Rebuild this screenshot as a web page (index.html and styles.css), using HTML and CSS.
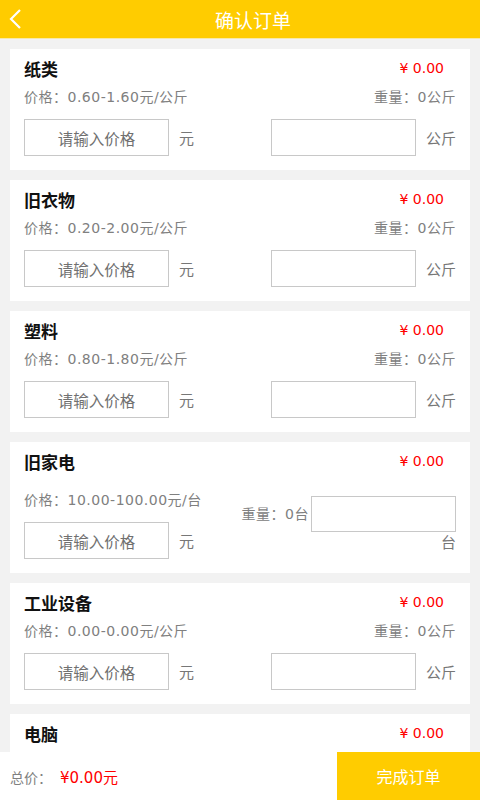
FILE: index.html
```html
<!DOCTYPE html>
<html lang="zh-CN">
<head>
  <meta charset="UTF-8">
  <meta name="viewport" content="width=device-width, initial-scale=1.0">
  <title>确认订单</title>
  <link rel="stylesheet" href="styles.css">
</head>
<body>
  <header class="topbar">
    <a class="back" href="#">
      <svg width="14" height="22" viewBox="0 0 14 22"><path d="M12 2 L3 11 L12 20" fill="none" stroke="#fff" stroke-width="2.2"/></svg>
    </a>
    <span class="title">确认订单</span>
  </header>

  <div class="list">
    <div class="card">
      <div class="row head"><span class="name">纸类</span><span class="amount">¥ 0.00</span></div>
      <div class="row info"><span>价格：0.60-1.60元/公斤</span><span>重量：0公斤</span></div>
      <div class="row inputs">
        <div class="group"><input class="box" placeholder="请输入价格"><span class="unit">元</span></div>
        <div class="group"><input class="box"><span class="unit">公斤</span></div>
      </div>
    </div>

    <div class="card">
      <div class="row head"><span class="name">旧衣物</span><span class="amount">¥ 0.00</span></div>
      <div class="row info"><span>价格：0.20-2.00元/公斤</span><span>重量：0公斤</span></div>
      <div class="row inputs">
        <div class="group"><input class="box" placeholder="请输入价格"><span class="unit">元</span></div>
        <div class="group"><input class="box"><span class="unit">公斤</span></div>
      </div>
    </div>

    <div class="card">
      <div class="row head"><span class="name">塑料</span><span class="amount">¥ 0.00</span></div>
      <div class="row info"><span>价格：0.80-1.80元/公斤</span><span>重量：0公斤</span></div>
      <div class="row inputs">
        <div class="group"><input class="box" placeholder="请输入价格"><span class="unit">元</span></div>
        <div class="group"><input class="box"><span class="unit">公斤</span></div>
      </div>
    </div>

    <div class="card tall">
      <div class="row head"><span class="name">旧家电</span><span class="amount">¥ 0.00</span></div>
      <div class="row split">
        <div class="col-left">
          <div class="info-text">价格：10.00-100.00元/台</div>
          <div class="group"><input class="box" placeholder="请输入价格"><span class="unit">元</span></div>
        </div>
        <div class="col-right">
          <div class="weight-line"><span class="info-text">重量：0台</span><input class="box"></div>
          <div class="unit under">台</div>
        </div>
      </div>
    </div>

    <div class="card">
      <div class="row head"><span class="name">工业设备</span><span class="amount">¥ 0.00</span></div>
      <div class="row info"><span>价格：0.00-0.00元/公斤</span><span>重量：0公斤</span></div>
      <div class="row inputs">
        <div class="group"><input class="box" placeholder="请输入价格"><span class="unit">元</span></div>
        <div class="group"><input class="box"><span class="unit">公斤</span></div>
      </div>
    </div>

    <div class="card last">
      <div class="row head"><span class="name">电脑</span><span class="amount">¥ 0.00</span></div>
    </div>
  </div>

  <footer class="bottombar">
    <div class="total">总价：<span class="total-num">¥0.00元</span></div>
    <button class="submit">完成订单</button>
  </footer>
</body>
</html>
```

FILE: styles.css
```css
html, body { height: 100%; }
body {
  margin: 0;
  background: #f2f2f2;
  font-family: "DejaVu Sans", "Noto Sans CJK SC", sans-serif;
  color: #777;
  display: flex;
  flex-direction: column;
  overflow: hidden;
}
.topbar {
  flex: none;
  height: 38px;
  padding-left: 26px;
  background: #ffcc00;
  display: flex;
  align-items: center;
  justify-content: center;
  position: relative;
  border-bottom: 1px solid #f7e9a8;
}
.topbar .back { position: absolute; left: 8px; top: 8px; display: block; height: 22px; }
.topbar .title { color: #fff; font-size: 19px; font-family: "Noto Sans CJK SC", sans-serif; }

.list { flex: 1; overflow: hidden; padding: 10px 10px 0; }
.card {
  background: #fff;
  padding: 9px 14px 14px;
  margin-bottom: 10px;
}
.card.last { padding-bottom: 30px; margin-bottom: 0; }
.row { display: flex; justify-content: space-between; align-items: center; }
.head { height: 20px; }
.name { font-size: 17px; font-weight: bold; color: #111; font-family: "Noto Sans CJK SC", sans-serif; }
.amount { font-size: 14px; color: #f00; margin-right: 12px; }
.info { height: 20px; margin-top: 8px; font-size: 14px; color: #808080; letter-spacing: 0.5px; }
.inputs { margin-top: 13px; }
.group { display: flex; align-items: center; }
.box {
  width: 145px;
  height: 37px;
  box-sizing: border-box;
  border: 1px solid #c8c8c8;
  background: #fff;
  font-family: "Noto Sans CJK SC", sans-serif;
  font-size: 15.5px;
  text-align: center;
  padding: 0;
  margin: 0;
  outline: none;
}
.box::placeholder { color: #707070; }
.unit { margin-left: 10px; font-size: 15px; color: #777; }

.split { margin-top: 19px; align-items: center; }
.info-text { font-size: 14px; color: #808080; line-height: 20px; letter-spacing: 0.5px; }
.col-left .group { margin-top: 12px; }
.col-right { display: flex; flex-direction: column; align-items: flex-end; }
.weight-line { display: flex; align-items: center; }
.weight-line .info-text { margin-right: 2px; }
.weight-line .box { height: 36px; }
.under { line-height: 20px; margin-top: 1px; }

.bottombar {
  flex: none;
  height: 48px;
  background: #fff;
  display: flex;
  align-items: center;
  justify-content: space-between;
}
.total { padding-left: 10px; font-size: 14px; color: #808080; }
.total-num { color: #f00; font-size: 15px; margin-left: 8px; }
.submit {
  width: 143px;
  height: 48px;
  border: none;
  background: #ffcc00;
  color: #fff;
  font-family: "Noto Sans CJK SC", sans-serif;
  font-size: 16px;
}
```
